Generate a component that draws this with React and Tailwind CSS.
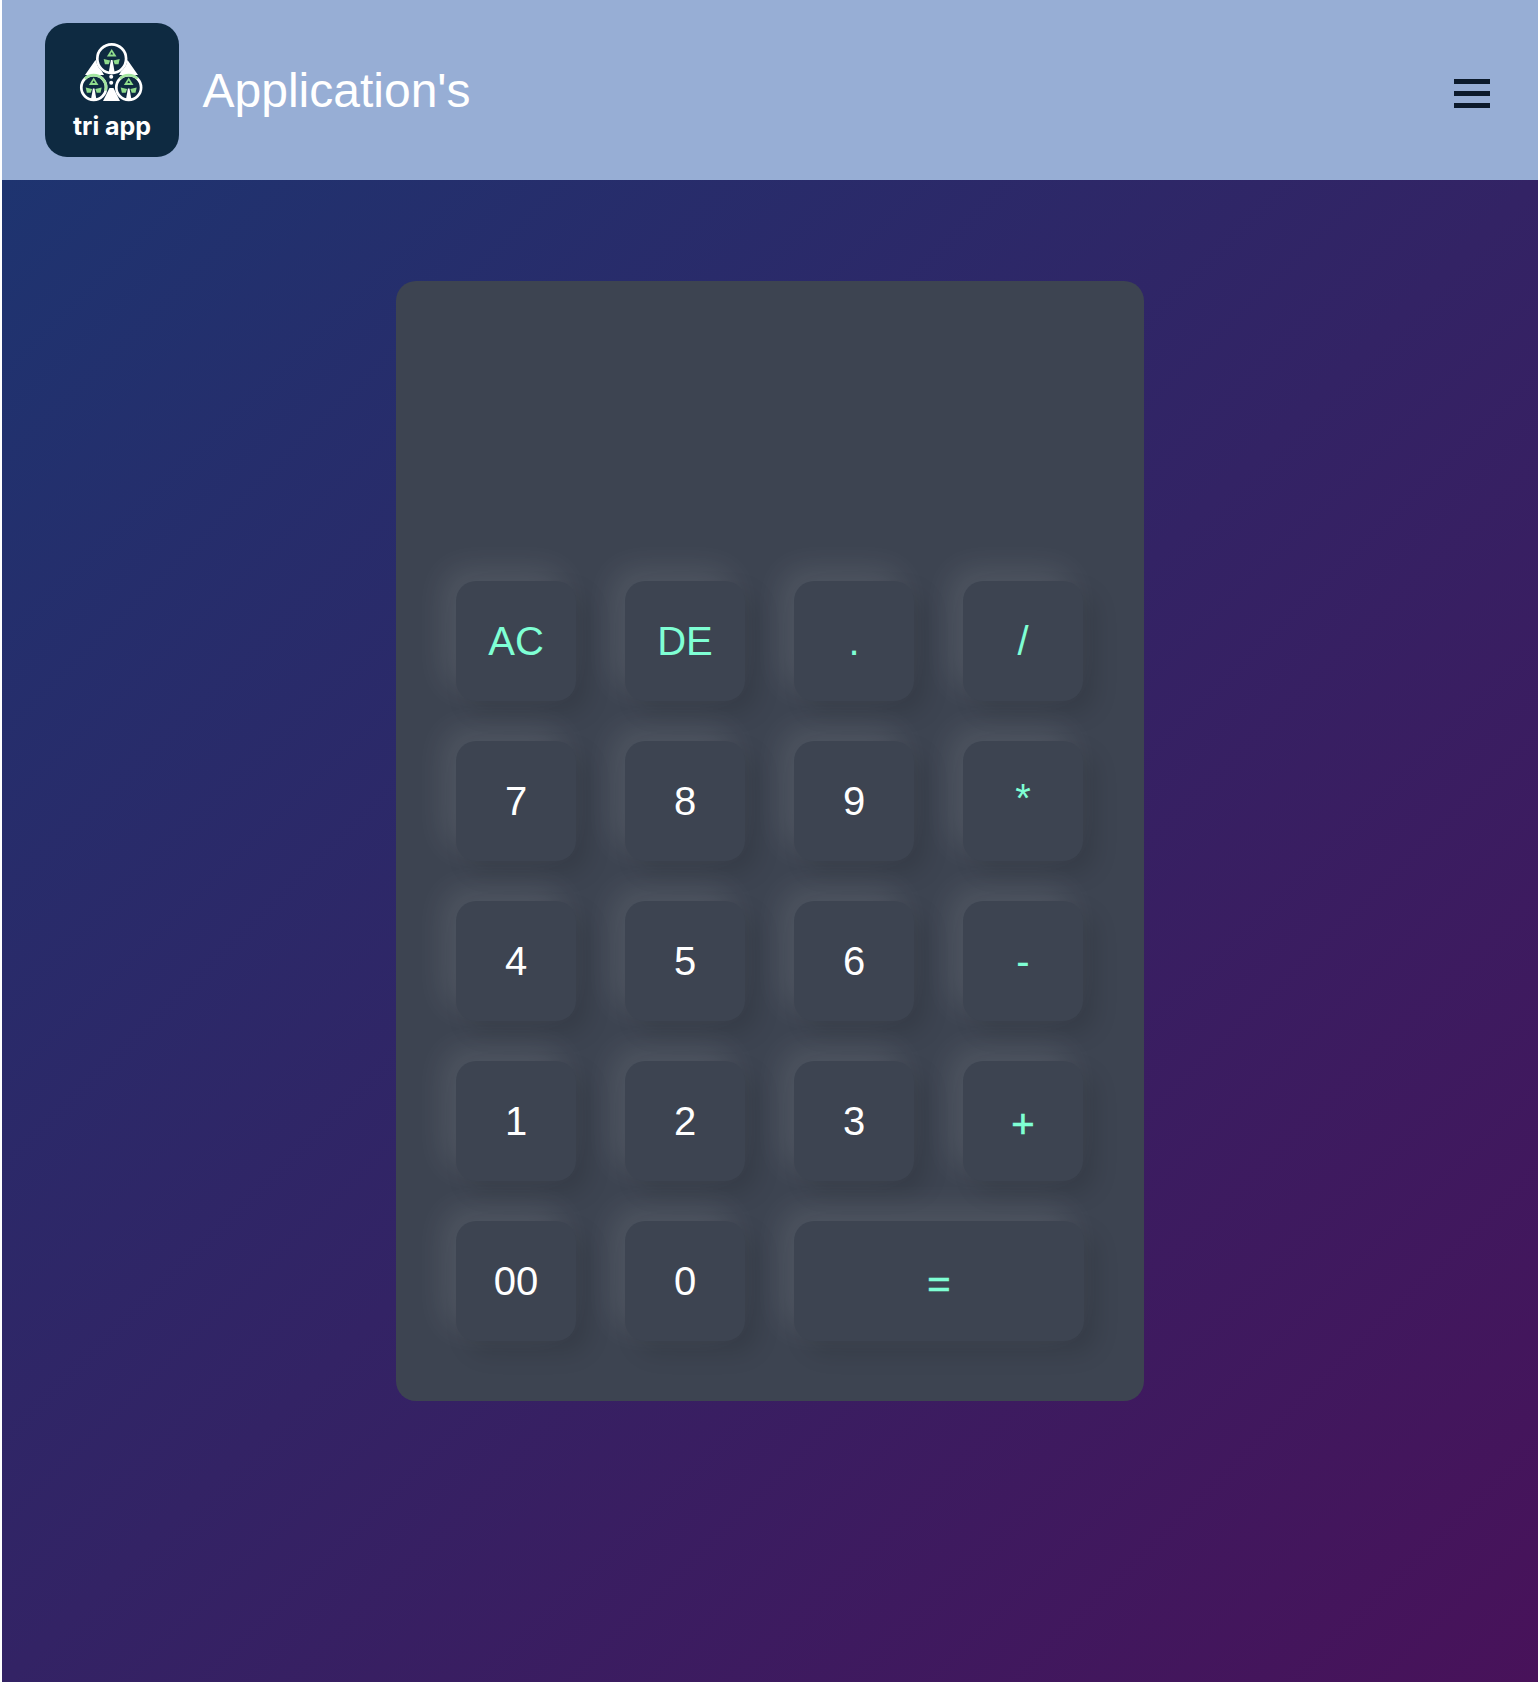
const keys = [
  {label: 'AC', accent: true},
  {label: 'DE', accent: true},
  {label: '.', accent: true},
  {label: '/', accent: true},
  {label: '7'},
  {label: '8'},
  {label: '9'},
  {label: '*', accent: true, nudge: 'pb-[6px]'},
  {label: '4'},
  {label: '5'},
  {label: '6'},
  {label: '-', accent: true},
  {label: '1'},
  {label: '2'},
  {label: '3'},
  {label: '+', accent: true, nudge: 'pt-[6px] [-webkit-text-stroke:0.6px_#7fffd4]'},
  {label: '00'},
  {label: '0'},
  {label: '=', accent: true, wide: true, nudge: 'pt-[6px] [-webkit-text-stroke:0.6px_#7fffd4]'},
];

// one leaf inside a logo ring
const Leaf = ({cx, cy}) => (
  <g>
    <path d={`M${cx} ${cy - 10}l4.8 7.6h-9.6z`} fill="#8fdc8c" />
    <path d={`M${cx} ${cy - 7}l1.4 2.6h-2.8z`} fill="#0e2a41" />
    <path d={`M${cx - 8} ${cy}l6.4 1.4l-1.4 3.8h-3.8z`} fill="#8fdc8c" />
    <path d={`M${cx + 8} ${cy}l-6.4 1.4l1.4 3.8h3.8z`} fill="#8fdc8c" />
    <path d={`M${cx - 0.8} ${cy + 1}h1.6l2.2 12.5h-6z`} fill="#fff" />
  </g>
);

const Logo = () => (
  <div className="w-[134px] h-[134px] shrink-0 rounded-[22px] bg-[#0e2a41] flex flex-col items-center">
    <svg className="w-[80px] h-[64px] mt-[17px]" viewBox="72 40 80 64">
      <path d="M95.5 60L85 75H104zM127.5 60L138 75H119z" fill="#fff" />
      <path d="M109.5 88h4l6.5 13h-17z" fill="#fff" />
      <circle cx="111.7" cy="58.7" r="15.6" fill="#0e2a41" />
      <circle cx="111.7" cy="58.7" r="14.4" fill="#0e2a41" stroke="#fff" strokeWidth="2.7" />
      <circle cx="93.7" cy="87.5" r="12.4" fill="#0e2a41" stroke="#fff" strokeWidth="2.7" />
      <path d="M84.9 78.7a12.4 12.4 0 0 1 17.6 0a12.4 12.4 0 0 1 3 12" fill="none" stroke="#a4e6a0" strokeWidth="2.7" />
      <circle cx="128.7" cy="87.5" r="12.4" fill="#0e2a41" stroke="#fff" strokeWidth="2.7" />
      <path d="M119.9 78.7a12.4 12.4 0 0 1 17.6 0" fill="none" stroke="#a4e6a0" strokeWidth="2.7" />
      <Leaf cx={111.7} cy={59} />
      <Leaf cx={93.7} cy={87.5} />
      <Leaf cx={128.7} cy={87.5} />
      <circle cx="111.2" cy="76.7" r="2" fill="#fff" />
      <circle cx="111.2" cy="82.7" r="2" fill="#fff" />
    </svg>
    <span className="mt-[7px] font-['Inter',sans-serif] font-bold text-[25px] leading-[30px] text-white">
      tri app
    </span>
  </div>
);

const Key = ({label, accent, wide, nudge = ''}) => (
  <button
    className={`h-[120px] rounded-[20px] bg-[#3d4451] text-[40px] leading-none shadow-[-12px_-12px_32px_rgba(255,255,255,0.1),12px_12px_25px_rgba(0,0,0,0.12)] ${
      wide ? 'col-span-2 w-[290px]' : 'w-[120px]'
    } ${accent ? 'text-[#7fffd4]' : 'text-white'} ${nudge}`}>
    {label}
  </button>
);

const App = () => {
  return (
    <div className="min-h-[1682px] pl-[2px] bg-white font-['Liberation_Sans',Arial,sans-serif]">
      <header className="h-[180px] flex items-center justify-between bg-[#97aed5] pl-[43px] pr-[48px]">
        <div className="flex items-center gap-[23.5px]">
          <Logo />
          <h1 className="text-[48px] leading-none text-white mt-[1px]">Application's</h1>
        </div>
        <div className="flex flex-col gap-[7px] mt-[7px]">
          <span className="block w-[36px] h-[5px] bg-[#0c1a2b]" />
          <span className="block w-[36px] h-[5px] bg-[#0c1a2b]" />
          <span className="block w-[36px] h-[5px] bg-[#0c1a2b]" />
        </div>
      </header>

      <main className="h-[1502px] pt-[101px] bg-[linear-gradient(to_bottom_right,#1e3470,#48125a)]">
        <div className="ml-[394px] w-[748px] h-[1120px] rounded-[20px] bg-[#3d4451] p-[60px]">
          <div className="h-[200px] mb-[40px]" />
          <div className="grid grid-cols-[repeat(4,120px)] gap-x-[49px] gap-y-[40px]">
            {keys.map(k => (
              <Key key={k.label} {...k} />
            ))}
          </div>
        </div>
      </main>
    </div>
  );
};

export default App;
